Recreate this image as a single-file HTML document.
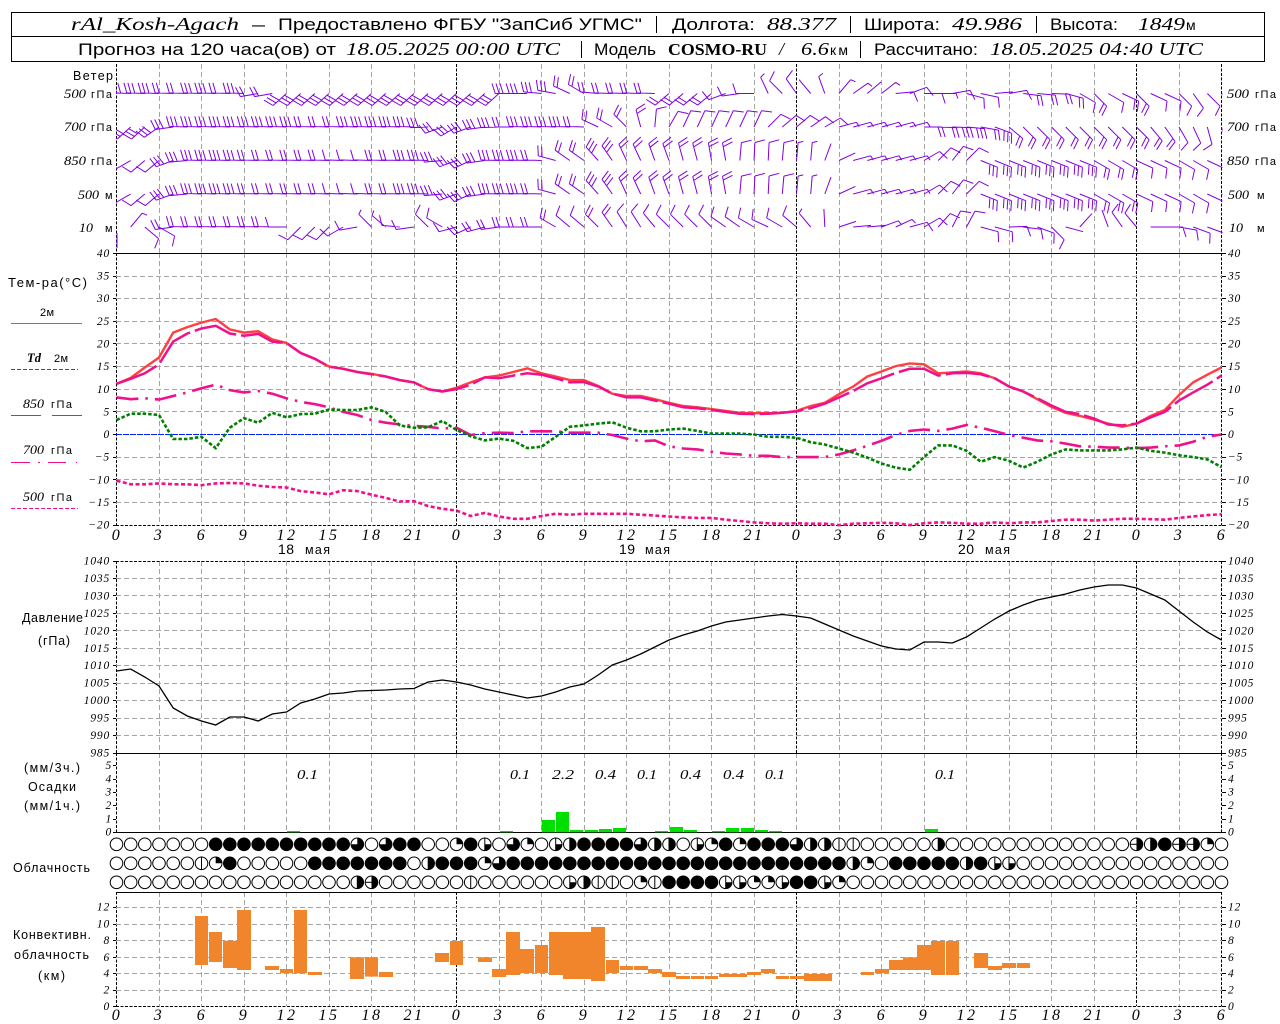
<!DOCTYPE html>
<html><head><meta charset="utf-8"><title>rAl_Kosh-Agach</title>
<style>
html,body{margin:0;padding:0;background:#fff}
svg{display:block}
text{fill:#000;font-family:"Liberation Sans",sans-serif}
.t{font-size:16.5px}
.i{font-family:"Liberation Serif",serif;font-style:italic;font-size:18px}
.b{font-family:"Liberation Serif",serif;font-weight:bold;font-size:17px}
.l{font-size:12.5px}
.li{font-family:"Liberation Serif",serif;font-style:italic;font-size:12.5px}
.n{font-family:"Liberation Serif",serif;font-style:italic;font-size:11.5px;letter-spacing:.8px}
.e{text-anchor:end}
.h{font-family:"Liberation Serif",serif;font-style:italic;font-size:16px;letter-spacing:2.5px;text-anchor:middle}
.p{font-family:"Liberation Serif",serif;font-style:italic;font-size:14px}
</style></head><body>
<svg id="s" xmlns="http://www.w3.org/2000/svg" width="1280" height="1024" viewBox="0 0 1280 1024">
<defs><clipPath id="c"><rect x="116" y="62" width="1106.5" height="191"/></clipPath></defs>
<g id="g"></g>
<g fill="none" stroke="#000" stroke-width="1">
<rect x="11.5" y="12.5" width="1253" height="49"/><path d="M11.5 36.5H1264.5M656.5 16V33M850.5 16V33M1036.5 16V33M581.5 41V58M860.5 41V58"/>
</g>
<text class="i" x="71" y="30" textLength="168" lengthAdjust="spacingAndGlyphs">rAl_Kosh-Agach</text>
<text class="t" x="252" y="30" textLength="13" lengthAdjust="spacingAndGlyphs">—</text>
<text class="t" x="278" y="30" textLength="364" lengthAdjust="spacingAndGlyphs">Предоставлено ФГБУ "ЗапСиб УГМС"</text>
<text class="t" x="672" y="30" textLength="83" lengthAdjust="spacingAndGlyphs">Долгота:</text>
<text class="i" x="767" y="30" textLength="69" lengthAdjust="spacingAndGlyphs">88.377</text>
<text class="t" x="864" y="30" textLength="76" lengthAdjust="spacingAndGlyphs">Широта:</text>
<text class="i" x="952" y="30" textLength="70" lengthAdjust="spacingAndGlyphs">49.986</text>
<text class="t" x="1050" y="30" textLength="68" lengthAdjust="spacingAndGlyphs">Высота:</text>
<text class="i" x="1138" y="30" textLength="47" lengthAdjust="spacingAndGlyphs">1849</text>
<text class="t" x="1186" y="30" style="font-size:14px">м</text>
<text class="t" x="78" y="55" textLength="258" lengthAdjust="spacingAndGlyphs">Прогноз на 120 часа(ов) от</text>
<text class="i" x="346" y="55" textLength="214" lengthAdjust="spacingAndGlyphs">18.05.2025 00:00 UTC</text>
<text class="t" x="594" y="55" textLength="62" lengthAdjust="spacingAndGlyphs">Модель</text>
<text class="b" x="668" y="55" textLength="99" lengthAdjust="spacingAndGlyphs">COSMO-RU</text>
<text class="i" x="779" y="55">/</text>
<text class="i" x="801" y="55" textLength="28" lengthAdjust="spacingAndGlyphs">6.6</text>
<text class="t" x="830" y="55" textLength="18" style="font-size:14px">км</text>
<text class="t" x="874" y="55" textLength="104" lengthAdjust="spacingAndGlyphs">Рассчитано:</text>
<text class="i" x="990" y="55" textLength="213" lengthAdjust="spacingAndGlyphs">18.05.2025 04:40 UTC</text>

<text class="l" x="73" y="80" textLength="40">Ветер</text>
<text class="li" x="64" y="98" textLength="22" lengthAdjust="spacingAndGlyphs">500</text><text class="l" x="91" y="98" textLength="21" style="font-size:11px">гПа</text>
<text class="li" x="64" y="131" textLength="22" lengthAdjust="spacingAndGlyphs">700</text><text class="l" x="91" y="131" textLength="21" style="font-size:11px">гПа</text>
<text class="li" x="64" y="165" textLength="22" lengthAdjust="spacingAndGlyphs">850</text><text class="l" x="91" y="165" textLength="21" style="font-size:11px">гПа</text>
<text class="li" x="78" y="199" textLength="21" lengthAdjust="spacingAndGlyphs">500</text><text class="l" x="105" y="199" style="font-size:11px">м</text>
<text class="li" x="79" y="232" textLength="14" lengthAdjust="spacingAndGlyphs">10</text><text class="l" x="105" y="232" style="font-size:11px">м</text>
<text class="li" x="1227" y="98" textLength="22" lengthAdjust="spacingAndGlyphs">500</text><text class="l" x="1255" y="98" textLength="21" style="font-size:11px">гПа</text>
<text class="li" x="1227" y="131" textLength="22" lengthAdjust="spacingAndGlyphs">700</text><text class="l" x="1255" y="131" textLength="21" style="font-size:11px">гПа</text>
<text class="li" x="1227" y="165" textLength="22" lengthAdjust="spacingAndGlyphs">850</text><text class="l" x="1255" y="165" textLength="21" style="font-size:11px">гПа</text>
<text class="li" x="1228" y="199" textLength="21" lengthAdjust="spacingAndGlyphs">500</text><text class="l" x="1257" y="199" style="font-size:11px">м</text>
<text class="li" x="1229" y="232" textLength="14" lengthAdjust="spacingAndGlyphs">10</text><text class="l" x="1257" y="232" style="font-size:11px">м</text>

<text class="l" x="8" y="287" textLength="79" style="font-size:13px">Тем-ра(°С)</text>
<text class="l" x="40" y="316" textLength="14" style="font-size:11px">2м</text>
<text class="li" x="27" y="362" textLength="14" style="font-weight:bold">Td</text><text class="l" x="54" y="362" textLength="14" style="font-size:11px">2м</text>
<text class="li" x="23" y="408" textLength="21" lengthAdjust="spacingAndGlyphs">850</text><text class="l" x="51" y="408" textLength="21" style="font-size:11px">гПа</text>
<text class="li" x="23" y="454" textLength="21" lengthAdjust="spacingAndGlyphs">700</text><text class="l" x="51" y="454" textLength="21" style="font-size:11px">гПа</text>
<text class="li" x="23" y="501" textLength="21" lengthAdjust="spacingAndGlyphs">500</text><text class="l" x="51" y="501" textLength="21" style="font-size:11px">гПа</text>

<text class="l" x="278" y="554" textLength="16" style="font-size:14px">18</text><text class="l" x="305" y="554" textLength="25">мая</text>
<text class="l" x="619" y="554" textLength="16" style="font-size:14px">19</text><text class="l" x="645" y="554" textLength="25">мая</text>
<text class="l" x="958" y="554" textLength="16" style="font-size:14px">20</text><text class="l" x="985" y="554" textLength="25">мая</text>

<text class="l" x="22" y="622" textLength="61">Давление</text>
<text class="l" x="38" y="645" textLength="32">(гПа)</text>
<text class="l" x="24" y="772" textLength="56">(мм/3ч.)</text>
<text class="l" x="28" y="791" textLength="48">Осадки</text>
<text class="l" x="24" y="810" textLength="56">(мм/1ч.)</text>
<text class="l" x="13" y="872" textLength="77">Облачность</text>
<text class="l" x="13" y="939" textLength="78">Конвективн.</text>
<text class="l" x="14" y="959" textLength="75">облачность</text>
<text class="l" x="38" y="980" textLength="27">(км)</text>

<text class="p" x="297" y="779" textLength="21" lengthAdjust="spacingAndGlyphs">0.1</text>
<text class="p" x="510" y="779" textLength="20" lengthAdjust="spacingAndGlyphs">0.1</text>
<text class="p" x="552" y="779" textLength="22" lengthAdjust="spacingAndGlyphs">2.2</text>
<text class="p" x="595" y="779" textLength="21" lengthAdjust="spacingAndGlyphs">0.4</text>
<text class="p" x="637" y="779" textLength="20" lengthAdjust="spacingAndGlyphs">0.1</text>
<text class="p" x="680" y="779" textLength="21" lengthAdjust="spacingAndGlyphs">0.4</text>
<text class="p" x="723" y="779" textLength="21" lengthAdjust="spacingAndGlyphs">0.4</text>
<text class="p" x="765" y="779" textLength="20" lengthAdjust="spacingAndGlyphs">0.1</text>
<text class="p" x="935" y="779" textLength="20" lengthAdjust="spacingAndGlyphs">0.1</text>

<g class="ln">
<text class="n e" x="110" y="257">40</text><text class="n e" x="110" y="279.5">35</text><text class="n e" x="110" y="302">30</text><text class="n e" x="110" y="325">25</text><text class="n e" x="110" y="347.5">20</text><text class="n e" x="110" y="370">15</text><text class="n e" x="110" y="393">10</text><text class="n e" x="110" y="415.5">5</text><text class="n e" x="110" y="438">0</text><text class="n e" x="110" y="460.5">−5</text><text class="n e" x="110" y="483.5">−10</text><text class="n e" x="110" y="506">−15</text><text class="n e" x="110" y="528.5">−20</text>
<text class="n" x="1228" y="257">40</text><text class="n" x="1228" y="279.5">35</text><text class="n" x="1228" y="302">30</text><text class="n" x="1228" y="325">25</text><text class="n" x="1228" y="347.5">20</text><text class="n" x="1228" y="370">15</text><text class="n" x="1228" y="393">10</text><text class="n" x="1228" y="415.5">5</text><text class="n" x="1228" y="438">0</text><text class="n" x="1228" y="460.5">−5</text><text class="n" x="1228" y="483.5">−10</text><text class="n" x="1228" y="506">−15</text><text class="n" x="1228" y="528.5">−20</text>
<text class="n e" x="110" y="564.5">1040</text><text class="n e" x="110" y="582">1035</text><text class="n e" x="110" y="599.5">1030</text><text class="n e" x="110" y="617">1025</text><text class="n e" x="110" y="634.5">1020</text><text class="n e" x="110" y="652">1015</text><text class="n e" x="110" y="669">1010</text><text class="n e" x="110" y="686.5">1005</text><text class="n e" x="110" y="704">1000</text><text class="n e" x="110" y="721.5">995</text><text class="n e" x="110" y="739">990</text><text class="n e" x="110" y="756.5">985</text>
<text class="n" x="1228" y="564.5">1040</text><text class="n" x="1228" y="582">1035</text><text class="n" x="1228" y="599.5">1030</text><text class="n" x="1228" y="617">1025</text><text class="n" x="1228" y="634.5">1020</text><text class="n" x="1228" y="652">1015</text><text class="n" x="1228" y="669">1010</text><text class="n" x="1228" y="686.5">1005</text><text class="n" x="1228" y="704">1000</text><text class="n" x="1228" y="721.5">995</text><text class="n" x="1228" y="739">990</text><text class="n" x="1228" y="756.5">985</text>
<text class="n e" x="112" y="769">5</text><text class="n e" x="112" y="782.5">4</text><text class="n e" x="112" y="795.5">3</text><text class="n e" x="112" y="809">2</text><text class="n e" x="112" y="822.5">1</text><text class="n e" x="112" y="835.5">0</text>
<text class="n" x="1228" y="769">5</text><text class="n" x="1228" y="782.5">4</text><text class="n" x="1228" y="795.5">3</text><text class="n" x="1228" y="809">2</text><text class="n" x="1228" y="822.5">1</text><text class="n" x="1228" y="835.5">0</text>
<text class="n e" x="110" y="910.5">12</text><text class="n e" x="110" y="927.5">10</text><text class="n e" x="110" y="944">8</text><text class="n e" x="110" y="961">6</text><text class="n e" x="110" y="977">4</text><text class="n e" x="110" y="993.5">2</text><text class="n e" x="110" y="1010">0</text>
<text class="n" x="1228" y="910.5">12</text><text class="n" x="1228" y="927.5">10</text><text class="n" x="1228" y="944">8</text><text class="n" x="1228" y="961">6</text><text class="n" x="1228" y="977">4</text><text class="n" x="1228" y="993.5">2</text><text class="n" x="1228" y="1010">0</text>
</g>

<g>
<text class="h" x="117" y="540">0</text><text class="h" x="159" y="540">3</text><text class="h" x="202" y="540">6</text><text class="h" x="244" y="540">9</text><text class="h" x="287" y="540">12</text><text class="h" x="329" y="540">15</text><text class="h" x="372" y="540">18</text><text class="h" x="414" y="540">21</text><text class="h" x="457" y="540">0</text><text class="h" x="499" y="540">3</text><text class="h" x="542" y="540">6</text><text class="h" x="584" y="540">9</text><text class="h" x="627" y="540">12</text><text class="h" x="669" y="540">15</text><text class="h" x="712" y="540">18</text><text class="h" x="754" y="540">21</text><text class="h" x="797" y="540">0</text><text class="h" x="839" y="540">3</text><text class="h" x="882" y="540">6</text><text class="h" x="924" y="540">9</text><text class="h" x="967" y="540">12</text><text class="h" x="1009" y="540">15</text><text class="h" x="1052" y="540">18</text><text class="h" x="1094" y="540">21</text><text class="h" x="1137" y="540">0</text><text class="h" x="1179" y="540">3</text><text class="h" x="1222" y="540">6</text>
<text class="h" x="117" y="1020">0</text><text class="h" x="159" y="1020">3</text><text class="h" x="202" y="1020">6</text><text class="h" x="244" y="1020">9</text><text class="h" x="287" y="1020">12</text><text class="h" x="329" y="1020">15</text><text class="h" x="372" y="1020">18</text><text class="h" x="414" y="1020">21</text><text class="h" x="457" y="1020">0</text><text class="h" x="499" y="1020">3</text><text class="h" x="542" y="1020">6</text><text class="h" x="584" y="1020">9</text><text class="h" x="627" y="1020">12</text><text class="h" x="669" y="1020">15</text><text class="h" x="712" y="1020">18</text><text class="h" x="754" y="1020">21</text><text class="h" x="797" y="1020">0</text><text class="h" x="839" y="1020">3</text><text class="h" x="882" y="1020">6</text><text class="h" x="924" y="1020">9</text><text class="h" x="967" y="1020">12</text><text class="h" x="1009" y="1020">15</text><text class="h" x="1052" y="1020">18</text><text class="h" x="1094" y="1020">21</text><text class="h" x="1137" y="1020">0</text><text class="h" x="1179" y="1020">3</text><text class="h" x="1222" y="1020">6</text>
</g>
</svg>
<script>
(function(){
var G=document.getElementById('g'),o=[];
function X(h){return 116.5+h*14.1667}
function L(d,st,w,da,ex){o.push('<path fill="none" d="'+d+'" stroke="'+st+'" stroke-width="'+(w||1)+'"'+(da?' stroke-dasharray="'+da+'"':'')+(ex||'')+'/>')}
var GR='#a4a4a4',BK='#000',D='5 3',cr=' shape-rendering="crispEdges"';
var panels=[[64,253],[253,525],[561,753],[753,832],[892,1006]];
panels.forEach(function(p,i){
 for(var k=0;k<=26;k++){
  var x=Math.floor(X(k*3))+.5,mid=(k%8==0)||k==26;
  var c=(mid&&i!=3&&i>=0)?BK:GR; if(i==3&&k!=0&&k!=26)c=GR; if(i==3&&(k==0||k==26))c=BK;
  L('M'+x+' '+p[0]+'V'+p[1],c,1,c==BK?'3 1.5':D,cr);
 }
});
// horizontal grids
var ys=[276,298.6,321.3,343.9,366.5,389.2,411.9,457.2,479.8,502.5];
ys.forEach(function(y){L('M116 '+(Math.floor(y)+.5)+'H1222',GR,1,D,cr)});
for(var p=1035;p>=990;p-=5){var y=561+3.49*(1040-p);L('M116 '+(Math.floor(y)+.5)+'H1222',GR,1,D,cr)}
[907.3,924,940.7,957.3,973.3,990].forEach(function(y){L('M116 '+(Math.floor(y)+.5)+'H1222',GR,1,D,cr)});
// ticks
var tk=[253.3,276,298.6,321.3,343.9,366.5,389.2,411.9,434.5,457.2,479.8,502.5,525.1,561,578.5,595.9,613.4,630.8,648.3,665.7,683.2,700.6,718.1,735.5,753,765.7,779,792,805.7,819,832,907.3,924,940.7,957.3,973.3,990,1006.3];
tk.forEach(function(y){y=Math.floor(y)+.5;L('M113 '+y+'H116M1222 '+y+'H1226',BK,1,null,cr)});
// heavy lines
L('M116 253.5H1222M116 753.5H1222M116 832.5H1222M116 892.5H1222',BK,1.2,null,cr);
L('M116 525.5H1222M116 561.5H1222M116 1006.5H1222',BK,1,'3 1.5',cr);
L('M116 434.5H1222','#0020ff',1,'6 1',cr);
// legend lines
L('M11 323.5H82','#ff4040',1,null,cr);
L('M11 369.5H78','#008000',1,'4 2',cr);
L('M11 415.5H41M52 415.5H82','#f0108c',1,null,cr);
L('M11 462.5H30M38 462.5H40M48 462.5H66M76 462.5H77','#f0108c',1,null,cr);
L('M11 508.5H78','#f0108c',1,'4 2',cr);
// wind
function exp(s){var r=[];s.split(' ').forEach(function(t){var m=t.split('*');var k=+(m[1]||1);for(var i=0;i<k;i++)r.push(m[0])});return r}
var w500=exp('272/3*4 272/2*2 272/3*2 272/2 272/3 260/2*2 228/3*16 270/3*2 275/3 280/3 295/2 300/2 275/2 272/2*4 230/2*4 250/1 262/1 270/1 335/.5 315/1 325/1 320/0 340/.5 40/.5 55/.5 50/0 52/.5 85/1 70/1 90/1 90/.5 80/1 105/1 102/1 85/0 80/1 97/2 95/2 92/2 105/2 120/1 135/2 120/1 115/2 135/2 115/1 115/1 135/1 145/1 135/1 135/0');
var w700=exp('235/3 228/3*2 235/3 262/3 272/3*9 272/2*3 272/3*5 268/3 250/3 240/3 250/3 262/3 268/3 270/2 272/3*4 272/2 295/2 300/2 315/2 345/2 5/1 30/1 25/1*6 45/1 50/1*2 55/1 60/1 75/.5*6 90/2 92/2 92/3 95/3 100/2 110/3 130/2 135/2*9 140/2 145/2 150/1 155/1 165/1 165/0');
var w850=exp('- 240/0 230/1*2 250/3 265/3 272/3*4 272/2*5 272/2 272/1*3 272/2*2 272/3*2 265/3 250/3 245/3 262/3 272/3*3 272/2 285/2 305/2*2 318/3 325/3 335/2*2 340/2*2 345/2*2 350/2*2 5/1 3/1*2 5/1 5/.5*2 20/0 65/0 75/.5*5 60/1 45/1 38/1 45/1 112/3*8 120/2*3 115/1*3 120/1*2 115/0*2');
var w10=exp('- 40/.5 130/1 120/1 262/2 272/2*7 270/1 225/1*3 240/1 260/1 315/.5 310/.5 275/1 262/1 315/1 300/1 255/1 245/2 255/2 262/2 270/2*3 300/2 310/1*2 315/2 325/2 328/1*2 320/1 315/1*4 305/1*2 300/1 295/1 300/1 310/1 320/.5 357/0 72/0 85/0*2 70/.5 65/.5 75/1 60/1 42/1 27/1 28/1 105/1*2 88/1 97/1 110/1 135/1 105/0 42/0 - 340/0 325/1 320/1 90/0 90/1 100/1 110/1 110/0 -');
var rows=[[93.5,w500],[127,w700],[160.5,w850],[194,w850],[227,w10]];
var d='';
function rd(a){return a*Math.PI/180}
rows.forEach(function(r){
 r[1].forEach(function(t,h){
  if(t=='-')return;
  var q=t.split('/'),a=+q[0],n=+q[1],x=X(h),y=r[0],SL=18,B=10.5,S=4;
  var ux=Math.sin(rd(a)),uy=-Math.cos(rd(a));
  var tx=x+ux*SL,ty=y+uy*SL;
  d+='M'+x.toFixed(1)+' '+y.toFixed(1)+'L'+tx.toFixed(1)+' '+ty.toFixed(1);
  var bx=Math.sin(rd(a+72)),by=-Math.cos(rd(a+72));
  var i=0,rem=n;
  while(rem>0){
   var len=rem>=1?B:B/2,sx=tx-ux*S*i,sy=ty-uy*S*i;
   d+='M'+sx.toFixed(1)+' '+sy.toFixed(1)+'l'+(bx*len).toFixed(1)+' '+(by*len).toFixed(1);
   rem-=1;i++;
  }
 });
});
d+='M117 233V248';
L(d,'#8000e0',1,null,' clip-path="url(#c)"');
// temperature
function TY(t){return (434.5-4.53*t).toFixed(1)}
function poly(a){return 'M'+a.map(function(v,h){return X(h).toFixed(1)+' '+TY(v)}).join('L')}
var T2=[11.2,12.5,14.8,17,22.5,23.7,24.7,25.5,23.2,22.5,22.8,21,20.2,18,16.7,15,14.5,13.8,13.4,12.8,12,11.5,10,9.5,10.3,11.5,12.6,13,13.8,14.6,13.5,12.8,12,12,10.7,9,8.5,8.5,7.8,7,6.3,6,5.6,5.2,4.8,4.7,4.7,4.8,5.2,6.3,7,8.9,10.6,12.8,13.9,15.1,15.7,15.5,13.5,13.7,13.9,13.5,12.4,10.6,9.5,7.8,6.1,4.8,4.1,3.3,2.4,1.7,2.4,4.1,5.4,8.7,11.5,13.2,14.8];
var P8=[11.2,12.3,13.5,15.5,20.5,22.3,23.4,24,22.3,21.8,22.2,20.5,20.2,18,16.7,15,14.5,13.8,13.3,12.8,12,11.5,10,9.5,10,11,12.6,12.4,13,13.5,13.2,12.4,11.5,11.6,10.6,9,8.2,8.2,7.5,6.8,6,5.8,5.4,5,4.6,4.5,4.6,4.8,5.1,5.8,6.8,8.2,9.6,11.3,12.4,13.6,14.5,14.5,13,13.5,13.6,13.3,12.4,10.6,9.5,8,6.4,5,4.5,3.5,2.2,2,2.4,3.8,5,7.5,9.3,11,13];
var TD=[3.2,4.6,4.6,4.3,-1,-1,-.5,-3,1.5,3.6,2.6,4.8,3.8,4.5,4.6,5.5,5.4,5.4,6,5,2,1.5,1.6,3,1,-.4,-1.3,-.9,-1.4,-3,-2.7,-.5,1.7,2,2.4,2.7,1.5,.7,.7,1.1,1.3,.8,.2,.2,.2,0,-.5,-.5,-.7,-1.7,-2.2,-3.1,-4,-5.1,-6.4,-7.3,-7.8,-5,-2.4,-2.4,-3.6,-6,-5,-5.8,-7.3,-6,-4.4,-3.3,-3.5,-3.5,-3.5,-3.3,-2.9,-3.6,-4,-4.6,-5,-5.5,-7.2];
var P7=[8.2,7.8,8,7.7,8.5,9.3,10.2,11,9.8,9.3,9.6,9,8,7.2,6.7,6,5,4.3,3.2,2.6,2.2,1.9,1.7,1.3,1.5,-.1,.3,.4,.3,.7,.7,.7,.4,.4,.4,-.1,-.9,-1.5,-1.3,-2.6,-3.1,-3.3,-3.8,-4.2,-4.4,-4.7,-4.7,-5,-5,-5,-5,-4.4,-3.5,-2.5,-1.4,-.1,.8,1.1,.8,1.3,2.1,1.5,.7,-.1,-.7,-1.3,-1.5,-2,-2.6,-2.7,-2.9,-2.9,-3,-2.9,-2.6,-2.4,-1.6,-.5,0];
var P5=[-10.2,-11,-11,-10.8,-11,-11,-11.2,-10.8,-10.7,-10.8,-11.3,-11.6,-11.7,-12.5,-12.8,-13.2,-12.3,-12.5,-13.3,-14,-14.8,-14.7,-15.8,-16.4,-16.8,-18,-17.3,-18.1,-18.6,-18.6,-18,-17.5,-17.7,-17.5,-17.5,-17.5,-17.5,-17.7,-17.9,-18.1,-18.3,-18.4,-18.4,-18.8,-19.1,-19.4,-19.6,-19.7,-19.6,-19.7,-19.7,-20,-19.7,-19.6,-19.5,-19.6,-20,-19.6,-19.4,-19.5,-19.7,-19.7,-19.4,-19.6,-19.4,-19.4,-19.1,-18.8,-18.8,-19,-18.8,-18.6,-18.6,-18.7,-18.8,-18.4,-18.1,-17.8,-17.6];
L(poly(T2),'#ff4040',2.4);
L(poly(P8),'#f0108c',2.5,'44 5');
L(poly(P7),'#f0108c',2.6,'22 7 2.5 7');
L(poly(P5),'#f0108c',2.6,'4 2.5');
L(poly(TD),'#008000',2.6,'3.5 2');
// pressure
var PR=[671,669,677,686,708,716,721,725,717,717,721,714,712,703,699,694,693,691,690.5,690,689,688.5,682,680,682,685,689,692,695,698,696,692,687,684,675,665,660,654,647,640,635,631,626,622,620,618,616,614.5,616,618,624,630,636,641,646,649,650,642,642,643,637,628,619,611,605,600,597,594,590,587,585,585,588,594,600,611,622,632,640];
L('M'+PR.map(function(v,h){return X(h).toFixed(1)+' '+v}).join('L'),'#000',1.3);
// bars: [x3a,x3b,y3a,y3b] in 3x crop coords with crop x offset, y origin 750
function bar(off,a,col){a.forEach(function(b){o.push('<rect x="'+(off+b[0]/3).toFixed(1)+'" y="'+(750+b[2]/3).toFixed(1)+'" width="'+((b[1]-b[0])/3).toFixed(1)+'" height="'+((b[3]-b[2])/3).toFixed(1)+'" fill="'+col+'"/>')})}
var GN='#00e000',OR='#f0852c';
bar(0,[[861,900,243,247]],GN);
bar(430,[[210,249,243,247],[335,375,210,247],[378,417,186,247],[420,460,240,247],[465,504,240,247],[507,546,237,247],[549,588,234,247],[675,714,243,247],[720,759,231,247],[762,801,240,247],[846,885,243,247],[888,927,234,247],[933,972,234,247],[975,1014,240,247],[1017,1056,243,247]],GN);
bar(850,[[225,264,237,247]],GN);
bar(0,[[585,624,498,645],[627,666,546,636],[669,711,572,654],[711,753,480,660],[795,837,648,660],[840,879,657,669],[882,921,480,670],[924,966,666,675],[1050,1092,622,687],[1095,1134,622,680],[1137,1179,666,681]],OR);
bar(430,[[15,57,609,636],[60,99,573,645],[144,186,622,636],[186,228,657,681],[228,270,546,675],[270,312,597,669],[315,354,585,669],[357,399,546,675],[399,441,546,687],[441,483,546,687],[483,525,531,693],[528,567,630,669],[570,609,648,660],[612,654,648,660],[654,696,657,669],[696,738,666,681],[738,780,678,687],[783,822,678,687],[825,864,678,687],[867,909,672,681],[909,951,672,681],[951,993,666,675],[993,1035,657,669],[1038,1077,678,687],[1080,1122,678,687],[1122,1164,672,693],[1164,1206,672,693]],OR);
bar(850,[[33,72,666,675],[75,117,657,669],[117,159,630,660],[159,201,622,660],[201,243,585,660],[243,285,573,675],[288,327,573,675],[372,414,609,654],[414,456,648,660],[456,498,639,654],[501,540,639,654]],OR);
// clouds
function z(n){return '0'.repeat(n)}
function fr(n){return 'f'.repeat(n)}
var C=[
 z(7)+fr(10)+'t0tff'+'00qfb0tq0bhffffthh0bqfqfffthhvv'+'00000h'+z(13)+'ehfeeq0',
 z(6)+'vqf'+z(5)+fr(7)+'0h'+'fff'+'qt'+fr(24)+'hq0'+fr(5)+'hfbb'+z(15),
 z(17)+'he'+z(6)+'v'+z(6)+'bhvv0qv'+'ffff'+'bbqqbffbq'+z(27)
];
var Ys=[844.3,863.3,882.3],R=6.3;
C.forEach(function(s,ri){
 var y=Ys[ri];
 for(var h=0;h<79;h++){
  var x=X(h),c=s[h],a='';
  var XY=function(dx,dy){return (x+dx).toFixed(1)+' '+(y+dy).toFixed(1)};
  o.push('<circle cx="'+x.toFixed(1)+'" cy="'+y+'" r="'+R+'" fill="'+(c=='f'?'#000':'#fff')+'" stroke="#000" stroke-width="1"/>');
  if(c=='q')a='M'+XY(0,0)+'L'+XY(0,-R)+'A'+R+' '+R+' 0 0 1 '+XY(R,0)+'Z';
  if(c=='h'||c=='e')a='M'+XY(0,-R)+'A'+R+' '+R+' 0 0 1 '+XY(0,R)+'Z';
  if(c=='t')a='M'+XY(0,-R)+'A'+R+' '+R+' 0 1 1 '+XY(-R,0)+'L'+XY(0,0)+'Z';
  if(c=='b')a='M'+XY(0,0)+'L'+XY(R,0)+'A'+R+' '+R+' 0 0 1 '+XY(0,R)+'Z';
  if(a)o.push('<path d="'+a+'" fill="#000"/>');
  if(c=='v'||c=='b'||c=='h')L('M'+XY(0,-R)+'L'+XY(0,R),'#000',1);
  if(c=='e')L('M'+XY(-R,0)+'L'+XY(0,0),'#000',1);
 }
});
G.innerHTML=o.join('');
})();
</script>
</body></html>
